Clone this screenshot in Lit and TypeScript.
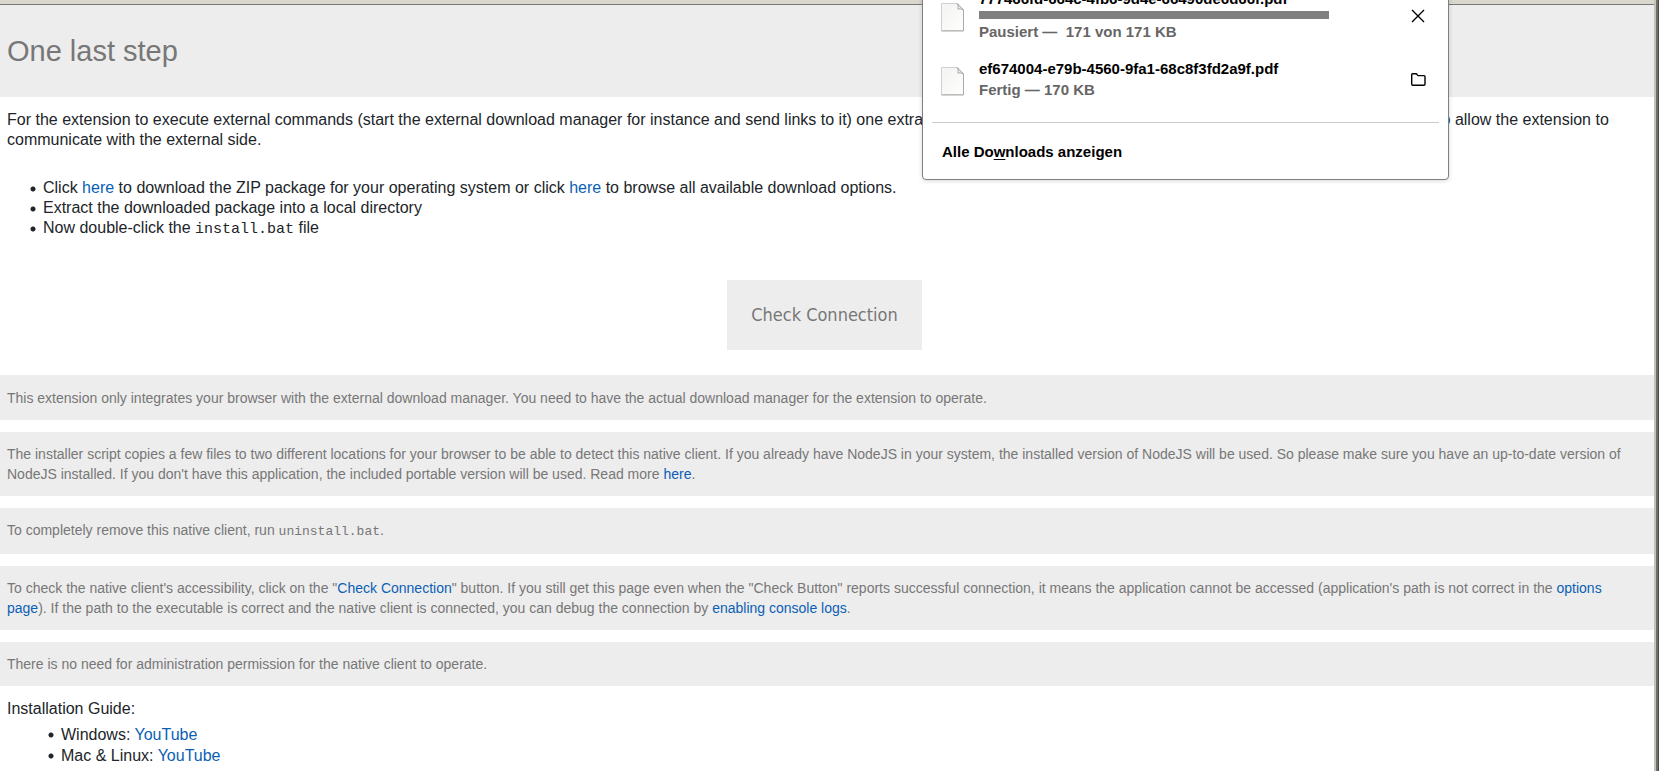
import { LitElement, html, css, svg } from "lit";
import { customElement, property } from "lit/decorators.js";

const cross = svg`<path d="M2 2 L14 14 M14 2 L2 14" />`;
const folder = svg`<path d="M1.7 12 V2.8 Q1.7 1.8 2.7 1.8 H6 Q6.8 1.8 7.2 2.8 Q7.6 3.6 8.4 3.6 H14 Q15 3.6 15 4.6 V12 Q15 13.2 14 13.2 H2.7 Q1.7 13.2 1.7 12 Z" />`;

@customElement("download-item")
class DownloadItem extends LitElement {
  @property() name = "";
  @property() status = "";
  @property() action = "open";
  @property({ type: Number }) progress = -1;

  static styles = css`
    :host {
      display: flex;
      align-items: center;
    }
    .page {
      width: 32px;
      height: 32px;
      margin-right: 10px;
      flex: none;
    }
    .main {
      flex: 1;
      min-width: 0;
      display: flex;
      flex-direction: column;
      white-space: pre;
    }
    .name,
    .status {
      line-height: 20px;
    }
    .status {
      margin-top: 1px;
      color: #666;
    }
    .bar {
      appearance: none;
      width: 350px;
      height: 8px;
      margin: 2px 0;
      border: 0;
      background: #ccc;
    }
    .bar::-webkit-progress-bar {
      background: #ccc;
    }
    .bar::-webkit-progress-value {
      background: #808080;
    }
    .action {
      width: 16px;
      height: 16px;
      padding: 0;
      border: 0;
      background: none;
      color: #000;
    }
    .glyph {
      display: block;
      fill: none;
      stroke: currentColor;
      stroke-width: 1.4;
    }
  `;

  render() {
    const cancel = this.action === "cancel";
    return html`
      <svg class="page" viewBox="0 0 32 32" aria-hidden="true">
        <defs>
          <linearGradient id="paper" x1="0" y1="0" x2="1" y2="1">
            <stop offset="0" stop-color="#f3f3f1" />
            <stop offset="1" stop-color="#fefefe" />
          </linearGradient>
        </defs>
        <path d="M4.5 3.5 H20.5 L26.5 9.5 V30.5 H4.5 Z" fill="url(#paper)" stroke="#d0d0d0" />
        <path d="M4.5 31 H26.5 V10" fill="none" stroke="#aaa" />
        <path d="M20 3.5 Q22 6 20.8 9 Q24 8.4 26.5 10 Z" fill="#eee" stroke="#aaa" />
      </svg>
      <div class="main">
        <span class="name">${this.name}</span>
        ${this.progress >= 0
          ? html`<progress class="bar" max="171" .value=${this.progress} aria-label=${this.name}></progress>`
          : ""}
        <span class="status">${this.status}</span>
      </div>
      <button class="action" aria-label=${cancel ? "Abbrechen" : "Ordner öffnen"}>
        <svg class="glyph" width="16" height="16" viewBox="0 0 16 16">${cancel ? cross : folder}</svg>
      </button>
    `;
  }
}

@customElement("downloads-panel")
class DownloadsPanel extends LitElement {
  static styles = css`
    :host {
      box-sizing: border-box;
      display: block;
      border: 1px solid #808080;
      border-radius: 4px;
      background: #fff;
      color: #000;
      font: bold 15px "Liberation Sans", Arial, sans-serif;
      box-shadow: 0 1px 4px rgba(0, 0, 0, 0.16);
    }
    .items {
      display: flex;
      flex-direction: column;
      gap: 17px;
      padding: 8px 22px 22px 14px;
    }
    .footer {
      margin: 0 9px;
      border-top: 1px solid #ccc;
    }
    .all {
      display: block;
      width: 100%;
      padding: 19px 10px 17px;
      border: 0;
      background: none;
      color: inherit;
      font: inherit;
      line-height: 20px;
      text-align: left;
    }
    .key {
      text-decoration: underline;
      text-underline-offset: 2px;
    }
  `;

  render() {
    return html`
      <div class="items">
        <download-item
          name="777466fd-664c-4fb6-9d4e-66490de6d66f.pdf"
          status="Pausiert —  171 von 171 KB"
          action="cancel"
          progress="171"
        ></download-item>
        <download-item name="ef674004-e79b-4560-9fa1-68c8f3fd2a9f.pdf" status="Fertig — 170 KB"></download-item>
      </div>
      <div class="footer">
        <button class="all">Alle Do<span class="key">w</span>nloads anzeigen</button>
      </div>
    `;
  }
}

@customElement("app-root")
class AppRoot extends LitElement {
  static styles = css`
    :host {
      display: block;
      position: relative;
      overflow: hidden;
      min-height: 100vh;
      box-sizing: border-box;
      border-right: 1px solid #4b4c38;
      background: #fff;
      color: #212529;
      font: 16px/20px "Liberation Sans", Arial, sans-serif;
    }
    .window {
      box-sizing: border-box;
      min-height: 100vh;
      border-right: 4px ridge #c4c2bd;
    }
    .toolbar {
      height: 4px;
      background: #d9d6ce;
      border-bottom: 1px solid #777;
    }
    .header {
      padding: 26px 7px;
      background: #ededed;
      color: #777;
    }
    .title {
      margin: 0;
      font-size: 29px;
      font-weight: 400;
      line-height: 40px;
    }
    .intro {
      margin: 0;
      padding: 13px 7px 0;
    }
    .steps,
    .videos {
      margin: 0;
      list-style: none;
    }
    .steps {
      padding: 28px 7px 0 29px;
    }
    .item {
      padding-left: 14px;
      background: radial-gradient(circle at 4px 11px, currentColor 2px, transparent 3px);
    }
    .actions {
      display: flex;
      justify-content: center;
      padding: 40px 5px 25px 0;
    }
    .check {
      padding: 20px 24px;
      border: 0;
      background: #ededed;
      color: #777;
      font: 18px/30px "DejaVu Sans Condensed", Tahoma, "Noto Sans", sans-serif;
    }
    .notes {
      display: flex;
      flex-direction: column;
      gap: 12px;
    }
    .note {
      margin: 0;
      padding: 12px 24px 12px 7px;
      background: #ededed;
      color: #777;
      font-size: 14px;
    }
    .note:first-child {
      padding-top: 13px;
    }
    .guide {
      margin: 0;
      padding: 13px 7px 0;
    }
    .videos {
      padding: 5px 7px 0 47px;
      line-height: 21px;
    }
    .link {
      color: #0b5fb5;
      text-decoration: none;
    }
    .code {
      font-family: "Liberation Mono", "Courier New", monospace;
      font-size: 15px;
    }
    .note .code {
      font-size: 13px;
    }
    .panel {
      position: absolute;
      top: -20px;
      right: 209px;
      width: 527px;
    }
  `;

  render() {
    return html`
      <div class="window">
        <div class="toolbar"></div>
        <header class="header"><h1 class="title">One last step</h1></header>
        <main>
          <p class="intro">
            For the extension to execute external commands (start the external download manager for instance and send
            links to it) one extra step is required. You need to install a small native client on your system to allow
            the extension to communicate with the external side.
          </p>
          <ul class="steps">
            <li class="item">
              Click <a class="link" href="#download">here</a> to download the ZIP package for your operating system or
              click <a class="link" href="#releases">here</a> to browse all available download options.
            </li>
            <li class="item">Extract the downloaded package into a local directory</li>
            <li class="item">Now double-click the <code class="code">install.bat</code> file</li>
          </ul>
          <div class="actions"><button class="check">Check Connection</button></div>
          <section class="notes">
            <p class="note">
              This extension only integrates your browser with the external download manager. You need to have the
              actual download manager for the extension to operate.
            </p>
            <p class="note">
              The installer script copies a few files to two different locations for your browser to be able to detect
              this native client. If you already have NodeJS in your system, the installed version of NodeJS will be
              used. So please make sure you have an up-to-date version of NodeJS installed. If you don't have this
              application, the included portable version will be used. Read more
              <a class="link" href="#more">here</a>.
            </p>
            <p class="note">
              To completely remove this native client, run <code class="code">uninstall.bat</code>.
            </p>
            <p class="note">
              To check the native client's accessibility, click on the "<a class="link" href="#check"
                >Check Connection</a
              >" button. If you still get this page even when the "Check Button" reports successful connection, it means
              the application cannot be accessed (application's path is not correct in the
              <a class="link" href="#options">options page</a>). If the path to the executable is correct and the native
              client is connected, you can debug the connection by
              <a class="link" href="#logs">enabling console logs</a>.
            </p>
            <p class="note">There is no need for administration permission for the native client to operate.</p>
          </section>
          <p class="guide">Installation Guide:</p>
          <ul class="videos">
            <li class="item">Windows: <a class="link" href="#windows">YouTube</a></li>
            <li class="item">Mac &amp; Linux: <a class="link" href="#unix">YouTube</a></li>
          </ul>
        </main>
      </div>
      <downloads-panel class="panel"></downloads-panel>
    `;
  }
}
